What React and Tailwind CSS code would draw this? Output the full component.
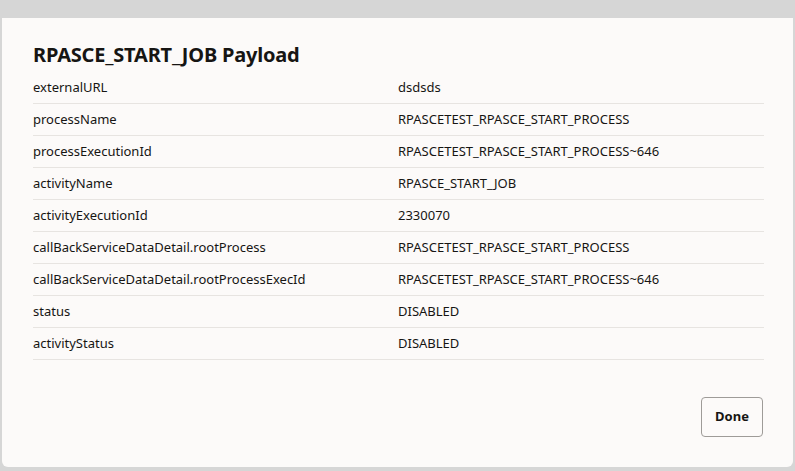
import React from 'react';

const rows = [
  ['externalURL', 'dsdsds'],
  ['processName', 'RPASCETEST_RPASCE_START_PROCESS'],
  ['processExecutionId', 'RPASCETEST_RPASCE_START_PROCESS~646'],
  ['activityName', 'RPASCE_START_JOB'],
  ['activityExecutionId', '2330070'],
  ['callBackServiceDataDetail.rootProcess', 'RPASCETEST_RPASCE_START_PROCESS'],
  ['callBackServiceDataDetail.rootProcessExecId', 'RPASCETEST_RPASCE_START_PROCESS~646'],
  ['status', 'DISABLED'],
  ['activityStatus', 'DISABLED'],
];

const App = () => {
  return (
    <div className="h-[471px] w-[795px] overflow-hidden bg-[#d6d6d6] pt-[18px] px-[2px] pb-[4px] font-['Noto_Sans',sans-serif] text-[#161513]">
      <div className="h-full flex flex-col bg-[#fcfaf9] rounded-b-md pl-[31px] pr-[29px]">
        <h2 className="pt-[25px] h-[54px] text-[20px] leading-[24px] font-bold tracking-[-0.2px]">
          RPASCE_START_JOB Payload
        </h2>
        <div className="flex flex-col">
          {rows.map(([label, value]) => (
            <div key={label} className="flex h-[32px] items-center border-b border-[#e7e4e1] text-[13px]">
              <div className="w-[365px]">{label}</div>
              <div className="flex-1">{value}</div>
            </div>
          ))}
        </div>
        <div className="flex justify-end pt-[37px] pr-[1px]">
          <button
            type="button"
            className="h-[40px] w-[62px] rounded border border-[#9e9b98] bg-[#fcfaf9] text-[13px] font-bold"
          >
            Done
          </button>
        </div>
      </div>
    </div>
  );
};

export default App;
